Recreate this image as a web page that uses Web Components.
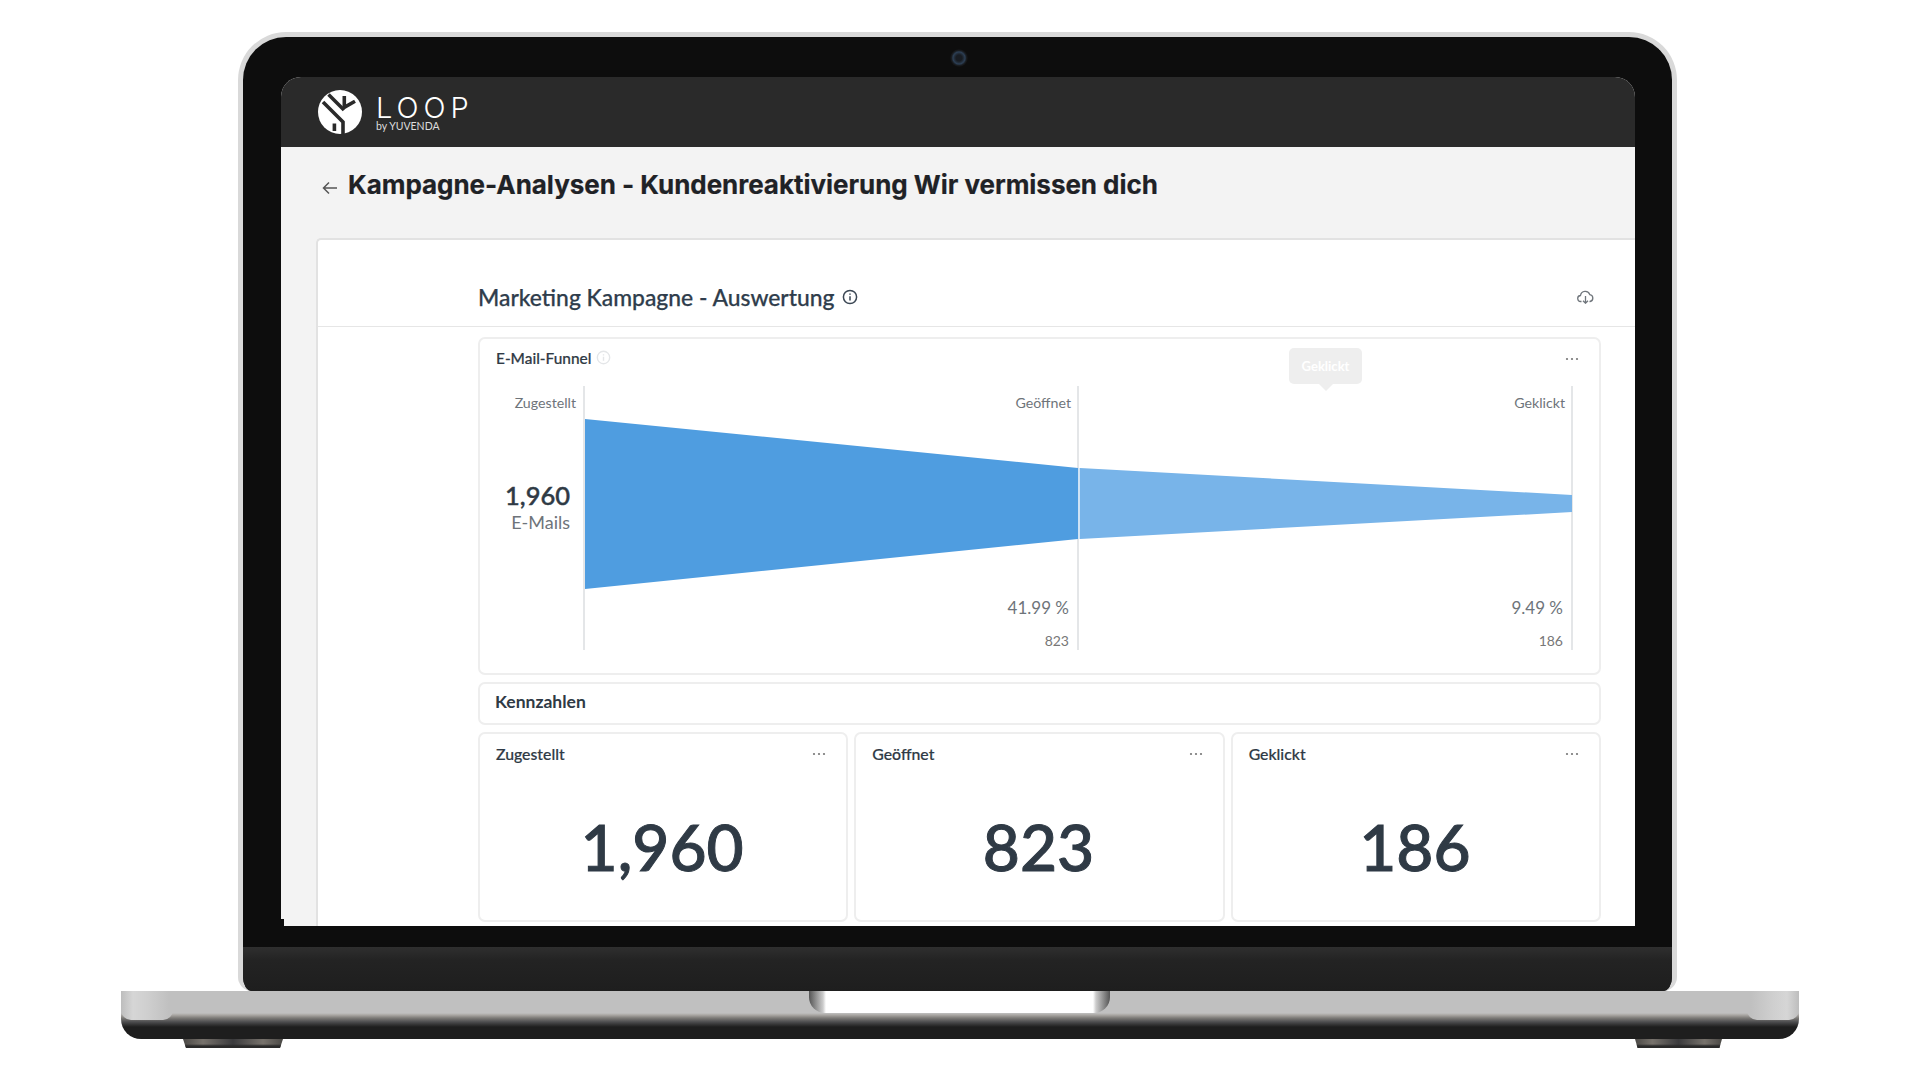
<!DOCTYPE html>
<html lang="de">
<head>
<meta charset="utf-8">
<title>Kampagne-Analysen</title>
<style>
  html, body { margin: 0; padding: 0; background: #fff; }
  body { width: 1920px; height: 1080px; overflow: hidden; font-family: Lato, sans-serif; color: #2f3a45; }
</style>
</head>
<body>
<laptop-frame>
  <app-header></app-header>
  <page-title>Kampagne-Analysen - Kundenreaktivierung Wir vermissen dich</page-title>
  <report-card heading="Marketing Kampagne - Auswertung">
    <funnel-card></funnel-card>
    <section-bar>Kennzahlen</section-bar>
    <kpi-row>
      <kpi-card label="Zugestellt" value="1,960"></kpi-card>
      <kpi-card label="Geöffnet" value="823"></kpi-card>
      <kpi-card label="Geklickt" value="186"></kpi-card>
    </kpi-row>
  </report-card>
</laptop-frame>

<script>
const dots = `<svg width="14" height="4" viewBox="0 0 14 4"><circle cx="2" cy="2" r="1.1"/><circle cx="7" cy="2" r="1.1"/><circle cx="12" cy="2" r="1.1"/></svg>`;
const infoIcon = (size, col) => `<svg width="${size}" height="${size}" viewBox="0 0 16 16" fill="none" stroke="${col}" stroke-width="1.5"><circle cx="8" cy="8" r="6.6"/><path d="M8 7.2v4.2M8 4.4v1.4"/></svg>`;

class LaptopFrame extends HTMLElement {
  constructor() {
    super();
    this.attachShadow({mode: 'open'}).innerHTML = `
      <style>
        :host { display: block; width: 1678px; margin: 32px 0 0 121px; }
        .lid {
          position: relative;
          margin: 0 122px 0 117px;
          height: 959px;
          box-sizing: border-box;
          padding: 40px 38px 0 38px;
          background: #0d0d0d;
          border: solid #d9d9d9;
          border-width: 5px 5px 0 5px;
          border-radius: 48px 48px 14px 14px;
          overflow: hidden;
        }
        .camera {
          position: absolute; left: 50%; top: 12px;
          width: 18px; height: 18px; margin-left: -8px;
          border-radius: 50%;
          background: radial-gradient(circle, #181c22 0 3px, #222c38 4.5px, #2c3f55 6px, #191c20 7.5px, #0f0f0f 9px);
        }
        .nick { position: absolute; left: 38px; bottom: 65px; width: 3px; height: 7px; background: #0d0d0d; }
        .screen {
          width: 1354px; height: 849px;
          background: #f3f3f3;
          border-radius: 20px 20px 0 0;
          overflow: hidden;
          display: flex; flex-direction: column;
          font-family: Lato, sans-serif;
        }
        .chin-black { height: 21px; }
        .chin {
          height: 44px;
          margin: 0 -38px;
          background: linear-gradient(#2f2f2f, #232323 30%, #1e1e1e);
        }
        .base {
          position: relative;
          height: 48px;
          overflow: hidden;
          border-radius: 0 0 20px 20px;
          background: linear-gradient(#c0c0c0 0 22px, #aaa7a3 24px, #7d7b78 27px, #4c4c4e 31px, #303030 34px, #1e1e1e 36px);
        }
        .shine { position: absolute; top: 0; width: 52px; height: 29px; border-radius: 0 0 10px 10px; }
        .shine.l { left: 0; background: linear-gradient(90deg, #bdbdbd, #d6d6d6 12px, #cfcfcf 26px, #c0c0c0 48px); }
        .shine.r { right: 0; background: linear-gradient(270deg, #bdbdbd, #d6d6d6 12px, #cfcfcf 26px, #c0c0c0 48px); }
        .notch {
          position: absolute; left: 688px; top: 0;
          width: 301px; height: 22px;
          border-radius: 0 0 16px 16px;
          background: linear-gradient(90deg, #555, #ccc 14px, #fff 17px, #fff 284px, #ccc 287px, #555);
        }
        .feet { display: flex; justify-content: space-between; padding: 0 77px 0 62px; }
        .foot {
          width: 100px; height: 9px;
          background:
            linear-gradient(transparent 5px, #2a2a2a 7px),
            linear-gradient(90deg, #4a4845, #77726c 20%, #3a3a3c 50%, #77726c 80%, #4a4845);
          clip-path: polygon(0 0, 100% 0, 97% 100%, 3% 100%);
        }
        .foot.r { width: 87px; }
      </style>
      <div class="lid">
        <div class="camera"></div>
        <div class="screen"><slot></slot></div>
        <div class="nick"></div>
        <div class="chin-black"></div>
        <div class="chin"></div>
      </div>
      <div class="base">
        <div class="shine l"></div><div class="shine r"></div><div class="notch"></div>
      </div>
      <div class="feet"><div class="foot"></div><div class="foot r"></div></div>`;
  }
}
customElements.define('laptop-frame', LaptopFrame);

class AppHeader extends HTMLElement {
  constructor() {
    super();
    this.attachShadow({mode: 'open'}).innerHTML = `
      <style>
        :host { display: flex; align-items: center; height: 70px; flex: none; background: #2a2a2a; padding-left: 37px; gap: 14px; color: #fff; }
        .word { display: flex; flex-direction: column; margin-top: 2px; }
        .loop { font: 300 29px/27px Inter, sans-serif; letter-spacing: 5px; }
        .by { font: 400 10.5px/11px Lato, sans-serif; color: #ddd; }
      </style>
      <svg width="44" height="44" viewBox="0 0 44 44">
        <circle cx="22" cy="22" r="22" fill="#fff"/>
        <g fill="none" stroke="#2a2a2a" stroke-width="3.6" stroke-linejoin="miter">
          <path d="M5 12 L25 32 V44"/>
          <path d="M10.5 4.5 L26 20"/>
          <path d="M26.3 6 V17.4 L37 11.3"/>
          <path d="M16.4 33.4 V41"/>
        </g>
      </svg>
      <div class="word"><span class="loop">LOOP</span><span class="by">by YUVENDA</span></div>`;
  }
}
customElements.define('app-header', AppHeader);

class PageTitle extends HTMLElement {
  constructor() {
    super();
    this.attachShadow({mode: 'open'}).innerHTML = `
      <style>
        :host { display: flex; align-items: center; flex: none; height: 91px; padding: 0 0 15px 41px; box-sizing: border-box; gap: 10px; }
        h1 { margin: 0; font: 700 26px/32px Inter, sans-serif; letter-spacing: -0.04px; -webkit-text-stroke: 0.2px #1f2226; color: #1f2226; white-space: nowrap; }
        svg { margin-top: 5px; }
      </style>
      <svg width="16" height="14" viewBox="0 0 16 14" fill="none" stroke="#555" stroke-width="1.5"><path d="M15 7H1.5M7 1.5 1.5 7 7 12.5"/></svg>
      <h1><slot></slot></h1>`;
  }
}
customElements.define('page-title', PageTitle);

class ReportCard extends HTMLElement {
  constructor() {
    super();
    this.attachShadow({mode: 'open'}).innerHTML = `
      <style>
        :host { display: flex; flex-direction: column; flex: 1; min-height: 0; margin-left: 35px; background: #fff; border: solid #e2e2e2; border-width: 2px 0 0 2px; border-radius: 5px 0 0 0; overflow: hidden; }
        header { flex: none; height: 87px; box-sizing: border-box; padding: 27px 41px 0 160px; border-bottom: 1px solid #e6e6e6; display: flex; align-items: center; justify-content: space-between; }
        .t { display: flex; align-items: center; gap: 8px; font: 500 22.85px/28px Lato, sans-serif; -webkit-text-stroke: 0.25px #2f3d4c; color: #2f3d4c; }
        main { padding: 10px 34px 0 160px; display: flex; flex-direction: column; gap: 7px; }
      </style>
      <header>
        <div class="t"><span>${this.getAttribute('heading')}</span>${infoIcon(16, '#3a4653')}</div>
        <svg width="17" height="14" viewBox="0 0 17 14" fill="none" stroke="#6f757b" stroke-width="1.3"><path d="M4.5 11.5H4a3 3 0 0 1-.5-6A4.8 4.8 0 0 1 12.8 4.6 3.5 3.5 0 0 1 13 11.5h-.5"/><path d="M8.5 6v7M6 10.8l2.5 2.4 2.5-2.4"/></svg>
      </header>
      <main><slot></slot></main>`;
  }
}
customElements.define('report-card', ReportCard);

class FunnelCard extends HTMLElement {
  constructor() {
    super();
    this.attachShadow({mode: 'open'}).innerHTML = `
      <style>
        :host { display: block; position: relative; height: 338px; box-sizing: border-box; border: 2px solid #eeeeee; border-radius: 7px; background: #fff; }
        .head { display: flex; align-items: center; gap: 5px; height: 37px; padding: 0 20px 0 16px; font: 500 15.4px/20px Lato, sans-serif; -webkit-text-stroke: 0.2px #2f3a45; color: #2f3a45; }
        .head .dots { margin-left: auto; fill: #767676; line-height: 0; }
        .plot { display: grid; grid-template-columns: 105px 1fr 1fr; height: 261px; margin: 10px 26px 0 0; }
        .col { display: flex; flex-direction: column; align-items: flex-end; padding-right: 6px; font-family: Lato, sans-serif; color: #6e747a; }
        .col:first-child { padding-right: 7px; }
        .line { border-right: 2px solid #e4e6e8; }
        .name { font-size: 14.2px; line-height: 18px; margin-top: 8px; }
        .big { font-size: 25.5px; line-height: 32px; font-weight: 500; -webkit-text-stroke: 0.45px #2f3a45; color: #2f3a45; margin: 67px 6px 0 0; }
        .unit { font-size: 18px; line-height: 22px; margin-right: 6px; }
        .pct { font-size: 17px; line-height: 20px; margin: 186px 2px 0 0; }
        .abs { font-size: 14px; line-height: 18px; margin: 14px 2px 0 0; color: #777; }
        .shape { position: absolute; left: 104px; top: 37px; }
        .tip { position: absolute; left: 809px; top: 9px; width: 73px; height: 36px; background: #eeeeee; border-radius: 5px; color: #fff; font: 700 13px/36px Lato, sans-serif; text-align: center; }
        .tip::after { content: ""; position: absolute; left: 30px; top: 36px; border: 7px solid transparent; border-top-color: #eeeeee; border-bottom: 0; }
      </style>
      <div class="head"><span>E-Mail-Funnel</span>${infoIcon(15, '#e4e6e8')}<span class="dots">${dots}</span></div>
      <svg class="shape" width="1000" height="270" viewBox="0 0 1000 270">
        <polygon points="1,43 494,92 494,163 1,213" fill="#4f9de0"/>
        <polygon points="496,92 988,119 988,136 496,163" fill="#78b4e9"/>
        <path d="M495 92V163" stroke="#cfe3f5" stroke-width="2"/>
      </svg>
      <div class="plot">
        <div class="col line">
          <span class="name">Zugestellt</span>
          <span class="big">1,960</span>
          <span class="unit">E-Mails</span>
        </div>
        <div class="col line">
          <span class="name">Geöffnet</span>
          <span class="pct">41.99 %</span>
          <span class="abs">823</span>
        </div>
        <div class="col line">
          <span class="name">Geklickt</span>
          <span class="pct">9.49 %</span>
          <span class="abs">186</span>
        </div>
      </div>
      <div class="tip">Geklickt</div>`;
  }
}
customElements.define('funnel-card', FunnelCard);

class SectionBar extends HTMLElement {
  constructor() {
    super();
    this.attachShadow({mode: 'open'}).innerHTML = `
      <style>
        :host { display: flex; align-items: center; height: 43px; box-sizing: border-box; padding: 0 0 4px 15px; border: 2px solid #eeeeee; border-radius: 7px; font: 700 17.5px/22px Lato, sans-serif; color: #2f3a45; }
      </style>
      <slot></slot>`;
  }
}
customElements.define('section-bar', SectionBar);

class KpiRow extends HTMLElement {
  constructor() {
    super();
    this.attachShadow({mode: 'open'}).innerHTML = `
      <style>
        :host { display: grid; grid-template-columns: repeat(3, 1fr); gap: 6px; }
      </style>
      <slot></slot>`;
  }
}
customElements.define('kpi-row', KpiRow);

class KpiCard extends HTMLElement {
  constructor() {
    super();
    this.attachShadow({mode: 'open'}).innerHTML = `
      <style>
        :host { display: flex; flex-direction: column; height: 190px; box-sizing: border-box; border: 2px solid #eeeeee; border-radius: 7px; padding: 0 20px 0 16px; }
        .top { display: flex; align-items: center; justify-content: space-between; height: 39px; font: 500 15.8px/20px Lato, sans-serif; -webkit-text-stroke: 0.2px #2f3a45; color: #2f3a45; fill: #767676; }
        .top svg { display: block; }
        .val { text-align: center; font: 500 64px/78px Lato, sans-serif; -webkit-text-stroke: 1px #2f3a45; color: #2f3a45; margin: 35px 0 0 2px; }
      </style>
      <div class="top"><span>${this.getAttribute('label')}</span>${dots}</div>
      <div class="val">${this.getAttribute('value')}</div>`;
  }
}
customElements.define('kpi-card', KpiCard);
</script>
</body>
</html>
